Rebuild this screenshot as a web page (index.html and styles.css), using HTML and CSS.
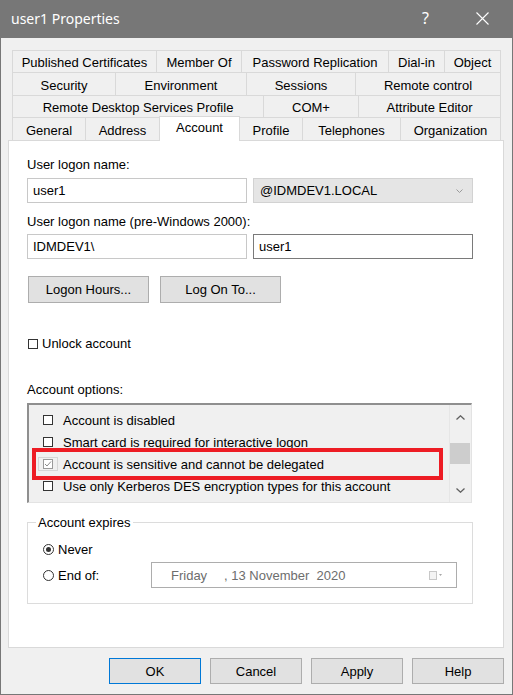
FILE: index.html
```html
<!DOCTYPE html>
<html>
<head>
<meta charset="utf-8">
<link rel="stylesheet" href="styles.css">
</head>
<body>
<div class="window">
  <div class="titlebar">
    <span class="title">user1 Properties</span>
    <span class="help">?</span>
    <svg class="close" width="13" height="13" viewBox="0 0 13 13"><path d="M0.5 0.5 L12.5 12.5 M12.5 0.5 L0.5 12.5" stroke="#ffffff" stroke-width="1.1" fill="none"/></svg>
  </div>
  <div class="client">
    <div class="tabs">
      <div class="tab-row row1">
        <div class="tab">Published Certificates</div>
        <div class="tab">Member Of</div>
        <div class="tab">Password Replication</div>
        <div class="tab">Dial-in</div>
        <div class="tab">Object</div>
      </div>
      <div class="tab-row row2">
        <div class="tab">Security</div>
        <div class="tab">Environment</div>
        <div class="tab">Sessions</div>
        <div class="tab">Remote control</div>
      </div>
      <div class="tab-row row3">
        <div class="tab">Remote Desktop Services Profile</div>
        <div class="tab">COM+</div>
        <div class="tab">Attribute Editor</div>
      </div>
      <div class="tab-row row4">
        <div class="tab">General</div>
        <div class="tab">Address</div>
        <div class="tab active">Account</div>
        <div class="tab">Profile</div>
        <div class="tab">Telephones</div>
        <div class="tab">Organization</div>
      </div>
    </div>
    <div class="panel">
      <div class="label">User logon name:</div>
      <div class="field-row gap-a">
        <div class="input light">user1</div>
        <div class="combo">@IDMDEV1.LOCAL
          <svg class="combo-arrow" width="7" height="4" viewBox="0 0 7 4"><path d="M0.5 0.5 L3.5 3.5 L6.5 0.5" stroke="#9a9a9a" fill="none" stroke-width="1"/></svg>
        </div>
      </div>
      <div class="label label2">User logon name (pre-Windows 2000):</div>
      <div class="field-row gap-b">
        <div class="input light">IDMDEV1\</div>
        <div class="input dark">user1</div>
      </div>
      <div class="btn-row">
        <div class="btn btn-wide">Logon Hours...</div>
        <div class="btn btn-wide">Log On To...</div>
      </div>
      <div class="check-line unlock">
        <span class="cb"></span><span>Unlock account</span>
      </div>
      <div class="label label-opts">Account options:</div>
      <div class="listbox">
        <div class="list-items">
          <div class="item"><span class="cb"></span><span>Account is disabled</span></div>
          <div class="item"><span class="cb"></span><span>Smart card is required for interactive logon</span></div>
          <div class="item"><span class="cb-wrap"><span class="cb checked"><svg width="8" height="8" viewBox="0 0 8 8"><path d="M1 4 L3 6 L7 1.5" stroke="#8a8a8a" stroke-width="1" fill="none"/></svg></span></span><span>Account is sensitive and cannot be delegated</span></div>
          <div class="item"><span class="cb"></span><span>Use only Kerberos DES encryption types for this account</span></div>
        </div>
        <div class="scrollbar">
          <svg class="sb-arrow" width="9" height="5" viewBox="0 0 9 5"><path d="M0.5 4.5 L4.5 0.8 L8.5 4.5" stroke="#606060" stroke-width="1.3" fill="none"/></svg>
          <div class="sb-track"><div class="sb-thumb"></div></div>
          <svg class="sb-arrow" width="9" height="5" viewBox="0 0 9 5"><path d="M0.5 0.5 L4.5 4.2 L8.5 0.5" stroke="#606060" stroke-width="1.3" fill="none"/></svg>
        </div>
        <div class="highlight"></div>
      </div>
      <fieldset class="group">
        <legend>Account expires</legend>
        <div class="radio-row first">
          <span class="radio-label"><span class="radio on"></span><span>Never</span></span>
        </div>
        <div class="radio-row">
          <span class="radio-label"><span class="radio"></span><span>End of:</span></span>
          <div class="datepicker">
            <span class="day">Friday</span><span>, 13 November&nbsp; 2020</span>
            <span class="cal">
              <svg width="14" height="9" viewBox="0 0 14 9"><rect x="0.5" y="0.5" width="7" height="8" fill="#f4f4f4" stroke="#c8c8c8"/><path d="M10 3 L13 3 L11.5 5 Z" fill="#a8a8a8"/></svg>
            </span>
          </div>
        </div>
      </fieldset>
    </div>
    <div class="footer">
      <div class="btn fbtn default">OK</div>
      <div class="btn fbtn">Cancel</div>
      <div class="btn fbtn">Apply</div>
      <div class="btn fbtn">Help</div>
    </div>
  </div>
</div>
</body>
</html>
```

FILE: styles.css
```css
* { box-sizing: border-box; }
html, body { margin: 0; padding: 0; }
body {
  font-family: "Liberation Sans", Arial, sans-serif;
  font-size: 13px;
  color: #000;
  background: #fff;
}
.window {
  width: 513px;
  height: 695px;
  background: #f0f0f0;
  border: 1px solid #777777;
  border-top: none;
  display: flex;
  flex-direction: column;
}
.titlebar {
  height: 38px;
  background: #777777;
  margin: 0 -1px;
  display: flex;
  align-items: center;
  color: #fff;
  flex: 0 0 38px;
}
.title {
  font-family: "Noto Sans", sans-serif;
  font-size: 14px;
  margin-left: 11px;
  margin-top: -1px;
}
.help {
  font-family: "Noto Sans", sans-serif;
  font-size: 16px;
  margin-left: auto;
  margin-right: 47px;
  margin-top: -2px;
}
.close {
  margin-right: 24px;
  margin-top: -2px;
}
.client {
  padding-top: 12px;
  display: flex;
  flex-direction: column;
}
.tabs {
  margin-left: 11px;
  width: 489px;
}
.tab-row {
  display: grid;
  height: 22px;
}
.row2, .row4 { height: 23px; }
.row1 { grid-template-columns: 144px 85px 147px 56px 57px; }
.row2 { grid-template-columns: 103px 131px 109px 146px; }
.row3 { grid-template-columns: 251px 95px 143px; }
.row4 { grid-template-columns: 73px 74px 81px 62px 98px 101px; }
.tab {
  border-top: 1px solid #d9d9d9;
  border-left: 1px solid #d9d9d9;
  display: flex;
  align-items: center;
  justify-content: center;
  white-space: nowrap;
  padding-top: 2px;
  line-height: 15px;
}
.tab:last-child { border-right: 1px solid #d9d9d9; }
.tab.active {
  background: #fff;
  position: relative;
  z-index: 1;
  margin-top: -1px;
  height: 25px;
  align-items: flex-start;
  padding-top: 3px;
  border-right: 1px solid #d9d9d9;
}
.tab.active + .tab { border-left: none; }
.panel {
  margin-left: 7px;
  width: 496px;
  height: 508px;
  background: #fff;
  border: 1px solid #d9d9d9;
  padding: 16px 0 0 18px;
}
.label { line-height: 15px; height: 15px; }
.field-row { display: flex; gap: 6px; }
.gap-a { margin-top: 6px; }
.label2 { margin-top: 11px; }
.gap-b { margin-top: 5px; }
.input {
  width: 220px;
  height: 25px;
  background: #fff;
  display: flex;
  align-items: center;
  padding-left: 5px;
}
.input.light { border: 1px solid #c8c8c8; }
.input.dark { border: 1px solid #7a7a7a; }
.combo {
  width: 220px;
  height: 25px;
  background: #e5e5e5;
  border: 1px solid #d2d2d2;
  display: flex;
  align-items: center;
  padding-left: 6px;
  position: relative;
}
.combo-arrow { margin-left: auto; margin-right: 9px; margin-top: 1px; }
.btn {
  background: #e1e1e1;
  border: 1px solid #adadad;
  display: flex;
  align-items: center;
  justify-content: center;
}
.btn-row { display: flex; margin-top: 17px; margin-left: 1px; gap: 11px; }
.btn-wide { width: 121px; height: 27px; }
.check-line {
  display: flex;
  align-items: center;
  gap: 4px;
  line-height: 15px;
}
.unlock { margin-top: 33px; margin-left: 1px; }
.cb {
  width: 10px;
  height: 10px;
  border: 1px solid #333;
  background: #fff;
  display: inline-flex;
  align-items: center;
  justify-content: center;
  flex: 0 0 10px;
}
.label-opts { margin-top: 31px; }
.listbox {
  position: relative;
  margin-top: 6px;
  width: 445px;
  height: 100px;
  background: #f0f0f0;
  border-top: 2px solid #8f8f8f;
  border-left: 2px solid #8f8f8f;
  border-right: 1px solid #e3e3e3;
  border-bottom: 1px solid #e3e3e3;
  display: flex;
}
.list-items {
  flex: 1;
  padding-top: 4px;
  padding-left: 14px;
}
.item {
  height: 22px;
  display: flex;
  align-items: center;
  gap: 10px;
  white-space: nowrap;
}
.cb-wrap {
  width: 20px;
  height: 14px;
  margin: 0 -5px 0 -5px;
  border: 1px solid #d6d6d6;
  display: inline-flex;
  align-items: center;
  justify-content: center;
  flex: 0 0 20px;
}
.cb.checked { border-color: #9a9a9a; }
.scrollbar {
  width: 21px;
  flex: 0 0 21px;
  margin-right: 1px;
  display: flex;
  flex-direction: column;
  align-items: center;
  border-left: 1px solid #e6e6e6;
}
.sb-arrow { margin-top: 10px; }
.sb-arrow:last-child { margin-top: 0; margin-bottom: 9px; }
.sb-track { flex: 1; width: 100%; padding-top: 23px; }
.sb-thumb { width: 20px; height: 21px; background: #cdcdcd; }
.highlight {
  position: absolute;
  left: 3px;
  top: 43px;
  width: 411px;
  height: 32px;
  border: 4px solid #ed1c24;
}
.group {
  margin: 12px 0 0 0;
  width: 446px;
  height: 89px;
  border: 1px solid #dcdcdc;
  padding: 0 0 0 8px;
  min-width: 0;
}
.group legend {
  padding: 0 2px;
  line-height: 15px;
}
.radio-row {
  display: flex;
  align-items: center;
  height: 26px;
  margin-left: 7px;
}
.radio-row.first { margin-top: 6px; }
.radio-label {
  display: flex;
  align-items: center;
  gap: 4px;
  width: 108px;
  flex: 0 0 108px;
}
.radio {
  width: 11px;
  height: 11px;
  border: 1px solid #333;
  border-radius: 50%;
  background: #fff;
  display: inline-flex;
  align-items: center;
  justify-content: center;
}
.radio.on::after {
  content: "";
  width: 5px;
  height: 5px;
  border-radius: 50%;
  background: #333;
}
.datepicker {
  width: 306px;
  height: 26px;
  border: 1px solid #adadad;
  background: #fff;
  display: flex;
  align-items: center;
  padding-left: 19px;
  color: #6d6d6d;
  white-space: nowrap;
}
.day { width: 53px; display: inline-block; }
.cal { margin-left: auto; margin-right: 13px; display: inline-flex; }
.footer {
  margin-top: 10px;
  display: flex;
  justify-content: flex-end;
  gap: 9px;
  padding-right: 8px;
}
.fbtn { width: 92px; height: 26px; }
.fbtn.default { border-color: #0078d7; }
```
